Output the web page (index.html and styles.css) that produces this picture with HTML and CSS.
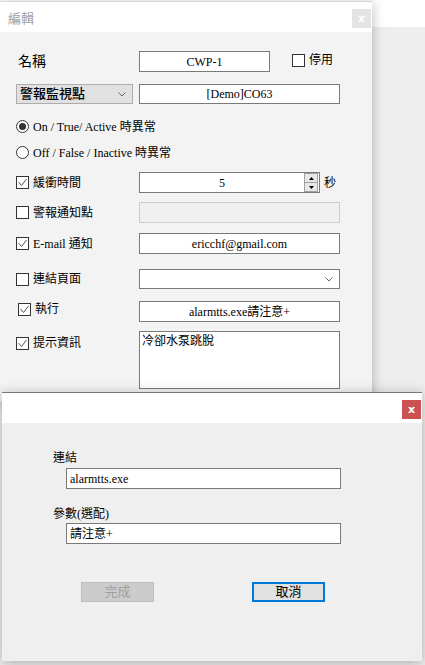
FILE: index.html
```html
<!DOCTYPE html>
<html lang="zh-Hant">
<head>
    <meta charset="UTF-8">
    <meta name="viewport" content="width=device-width, initial-scale=1.0">
    <title>編輯</title>
    <link rel="stylesheet" href="styles.css">
</head>
<body>
    <!-- Back window: alarm point editor -->
    <div class="window edit">
        <div class="titlebar">
            <span class="title">編輯</span>
            <span class="close">x</span>
        </div>
        <div class="form">
            <div class="row">
                <span class="label name">名稱</span>
                <div class="field short">CWP-1</div>
                <span class="check disable"><span class="box"></span>停用</span>
            </div>
            <div class="row">
                <div class="select">
                    <span>警報監視點</span>
                    <svg class="chevron" width="8" height="5" viewBox="0 0 8 5"><polyline points="0.5,0.5 4,4 7.5,0.5" fill="none" stroke="#666" stroke-width="1"/></svg>
                </div>
                <div class="field">[Demo]CO63</div>
            </div>
            <div class="row radio-row">
                <span class="radio on"></span>On / True/ Active 時異常
            </div>
            <div class="row radio-row">
                <span class="radio"></span>Off / False / Inactive 時異常
            </div>
            <div class="row">
                <span class="check label">
                    <span class="box"><svg width="11" height="11" viewBox="0 0 11 11"><polyline points="1.5,5 4.5,8.5 9.5,2" fill="none" stroke="#555" stroke-width="1"/></svg></span>緩衝時間
                </span>
                <div class="field spin">
                    <span class="spin-value">5</span>
                    <span class="spin-buttons">
                        <span class="spin-btn"><svg width="5" height="3" viewBox="0 0 5 3"><polygon points="2.5,0 5,3 0,3" fill="#000"/></svg></span>
                        <span class="spin-btn"><svg width="5" height="3" viewBox="0 0 5 3"><polygon points="0,0 5,0 2.5,3" fill="#000"/></svg></span>
                    </span>
                </div>
                <span class="unit">秒</span>
            </div>
            <div class="row">
                <span class="check label"><span class="box"></span>警報通知點</span>
                <div class="field disabled"></div>
            </div>
            <div class="row">
                <span class="check label">
                    <span class="box"><svg width="11" height="11" viewBox="0 0 11 11"><polyline points="1.5,5 4.5,8.5 9.5,2" fill="none" stroke="#555" stroke-width="1"/></svg></span>E-mail 通知
                </span>
                <div class="field">ericchf@gmail.com</div>
            </div>
            <div class="row">
                <span class="check label"><span class="box"></span>連結頁面</span>
                <div class="field combo">
                    <svg class="chevron" width="8" height="5" viewBox="0 0 8 5"><polyline points="0.5,0.5 4,4 7.5,0.5" fill="none" stroke="#666" stroke-width="1"/></svg>
                </div>
            </div>
            <div class="row top">
                <span class="check label run">
                    <span class="box"><svg width="11" height="11" viewBox="0 0 11 11"><polyline points="1.5,5 4.5,8.5 9.5,2" fill="none" stroke="#555" stroke-width="1"/></svg></span>執行
                </span>
                <div class="field">alarmtts.exe請注意+</div>
            </div>
            <div class="row top">
                <span class="check label memo-label">
                    <span class="box"><svg width="11" height="11" viewBox="0 0 11 11"><polyline points="1.5,5 4.5,8.5 9.5,2" fill="none" stroke="#555" stroke-width="1"/></svg></span>提示資訊
                </span>
                <div class="field memo">冷卻水泵跳脫</div>
            </div>
        </div>
    </div>

    <!-- Front window: run command -->
    <div class="window exec">
        <div class="titlebar">
            <span class="close red">x</span>
        </div>
        <div class="exec-body">
            <div class="exec-label">連結</div>
            <div class="field left">alarmtts.exe</div>
            <div class="exec-label second">參數(選配)</div>
            <div class="field left">請注意+</div>
            <div class="buttons">
                <span class="btn disabled-btn">完成</span>
                <span class="btn cancel">取消</span>
            </div>
        </div>
    </div>
</body>
</html>
```

FILE: styles.css
```css
body {
    margin: 0;
    width: 425px;
    height: 665px;
    overflow: hidden;
    position: relative;
    background: linear-gradient(#fff 27px, #eeeeee 27px);
    font-family: "Liberation Serif", "Noto Sans CJK TC", serif;
    font-size: 12px;
    color: #000;
}

.window {
    position: absolute;
    box-shadow: 0 2px 12px rgba(0, 0, 0, 0.28);
}

.titlebar {
    position: relative;
    background-color: #fff;
}

.close {
    position: absolute;
    width: 19px;
    height: 19px;
    display: flex;
    align-items: center;
    justify-content: center;
    font-family: "DejaVu Sans", sans-serif;
    font-size: 11px;
    font-weight: bold;
    color: #fff;
    background-color: #e4e4e4;
}

/* back window */
.edit {
    left: 0;
    top: 1px;
    width: 372px;
    height: 400px;
    background-color: #f3f3f3;
    border-top: 1px solid #d8d8d8;
}

.edit .titlebar {
    height: 30px;
}

.title {
    position: absolute;
    left: 8px;
    top: 7px;
    font-family: "Noto Sans CJK TC", sans-serif;
    font-size: 13px;
    line-height: 17px;
    color: #a0a0a0;
}

.edit .close {
    left: 352px;
    top: 7px;
}

.form {
    display: grid;
    grid-template-rows: 33px 29px 26px 33px 30px 31px 36px 32px 30px 58px;
    padding: 19px 0 0 16px;
}

.row {
    display: flex;
    align-items: center;
    align-self: start;
}

.row.top {
    align-items: flex-start;
}

.label {
    width: 123px;
    line-height: 16px;
}

.name {
    padding-left: 2px;
    width: 121px;
    font-size: 14px;
}

.check {
    display: flex;
    align-items: center;
    gap: 4px;
    line-height: 16px;
}

.run {
    padding-left: 2px;
    width: 121px;
}

.memo-label {
    margin-top: 4px;
}

.box {
    width: 13px;
    height: 13px;
    box-sizing: border-box;
    border: 1px solid #333;
    background-color: #fff;
    display: flex;
    align-items: center;
    justify-content: center;
}

.disable {
    margin-left: 22px;
    margin-top: -3px;
}

.field {
    width: 201px;
    height: 21px;
    box-sizing: border-box;
    border: 1px solid #7a7a7a;
    background-color: #fff;
    display: flex;
    align-items: center;
    justify-content: center;
    line-height: 16px;
    white-space: nowrap;
}

.short {
    width: 131px;
}

.select {
    width: 117px;
    height: 20px;
    margin-right: 6px;
    box-sizing: border-box;
    border: 1px solid #adadad;
    background-color: #e1e1e1;
    display: flex;
    align-items: center;
    justify-content: space-between;
    padding: 0 6px 0 3px;
    font-size: 13px;
    font-weight: 500;
    line-height: 16px;
}

.row .select + .field {
    height: 20px;
}

.radio-row {
    height: 26px;
    gap: 4px;
}

.radio {
    width: 13px;
    height: 13px;
    box-sizing: border-box;
    border: 1px solid #333;
    border-radius: 50%;
    background-color: #fff;
    display: flex;
    align-items: center;
    justify-content: center;
}

.radio.on::after {
    content: "";
    width: 7px;
    height: 7px;
    border-radius: 50%;
    background-color: #333;
}

.spin {
    width: 181px;
    justify-content: space-between;
    padding-right: 1px;
}

.spin-value {
    flex: 1;
    text-align: center;
}

.spin-buttons {
    display: flex;
    flex-direction: column;
    width: 14px;
    height: 19px;
    box-sizing: border-box;
    border: 1px solid #a0a0a0;
}

.spin-btn {
    flex: 1;
    display: flex;
    align-items: center;
    justify-content: center;
    background-color: #e8e8e8;
}

.spin-btn + .spin-btn {
    border-top: 1px solid #a0a0a0;
}

.unit {
    margin-left: 4px;
    line-height: 16px;
}

.disabled {
    background-color: #f0f0f0;
    border-color: #cccccc;
}

.combo {
    height: 20px;
    justify-content: flex-end;
    padding-right: 6px;
}

.memo {
    height: 58px;
    align-items: flex-start;
    justify-content: flex-start;
    padding: 1px 2px;
}

/* front window */
.exec {
    left: 2px;
    top: 392px;
    width: 420px;
    height: 268px;
    background-color: #efefef;
    border-top: 1px solid #777;
}

.exec .titlebar {
    height: 30px;
}

.close.red {
    right: 1px;
    top: 7px;
    background-color: #cc5151;
}

.exec-body {
    padding: 27px 0 0 51px;
}

.exec-label {
    line-height: 17px;
}

.exec-label.second {
    margin-top: 17px;
}

.exec-label + .field {
    margin-left: 13px;
    width: 275px;
}

.exec-label:first-child + .field {
    margin-top: 1px;
}

.left {
    justify-content: flex-start;
    padding-left: 3px;
}

.buttons {
    display: flex;
    gap: 98px;
    margin: 38px 0 0 28px;
}

.btn {
    width: 73px;
    height: 20px;
    box-sizing: border-box;
    display: flex;
    align-items: center;
    justify-content: center;
    font-size: 13px;
    line-height: 16px;
}

.disabled-btn {
    background-color: #cccccc;
    border: 1px solid #bfbfbf;
    color: #a0a0a0;
}

.cancel {
    background-color: #e1e1e1;
    border: 2px solid #0078d7;
}
```
